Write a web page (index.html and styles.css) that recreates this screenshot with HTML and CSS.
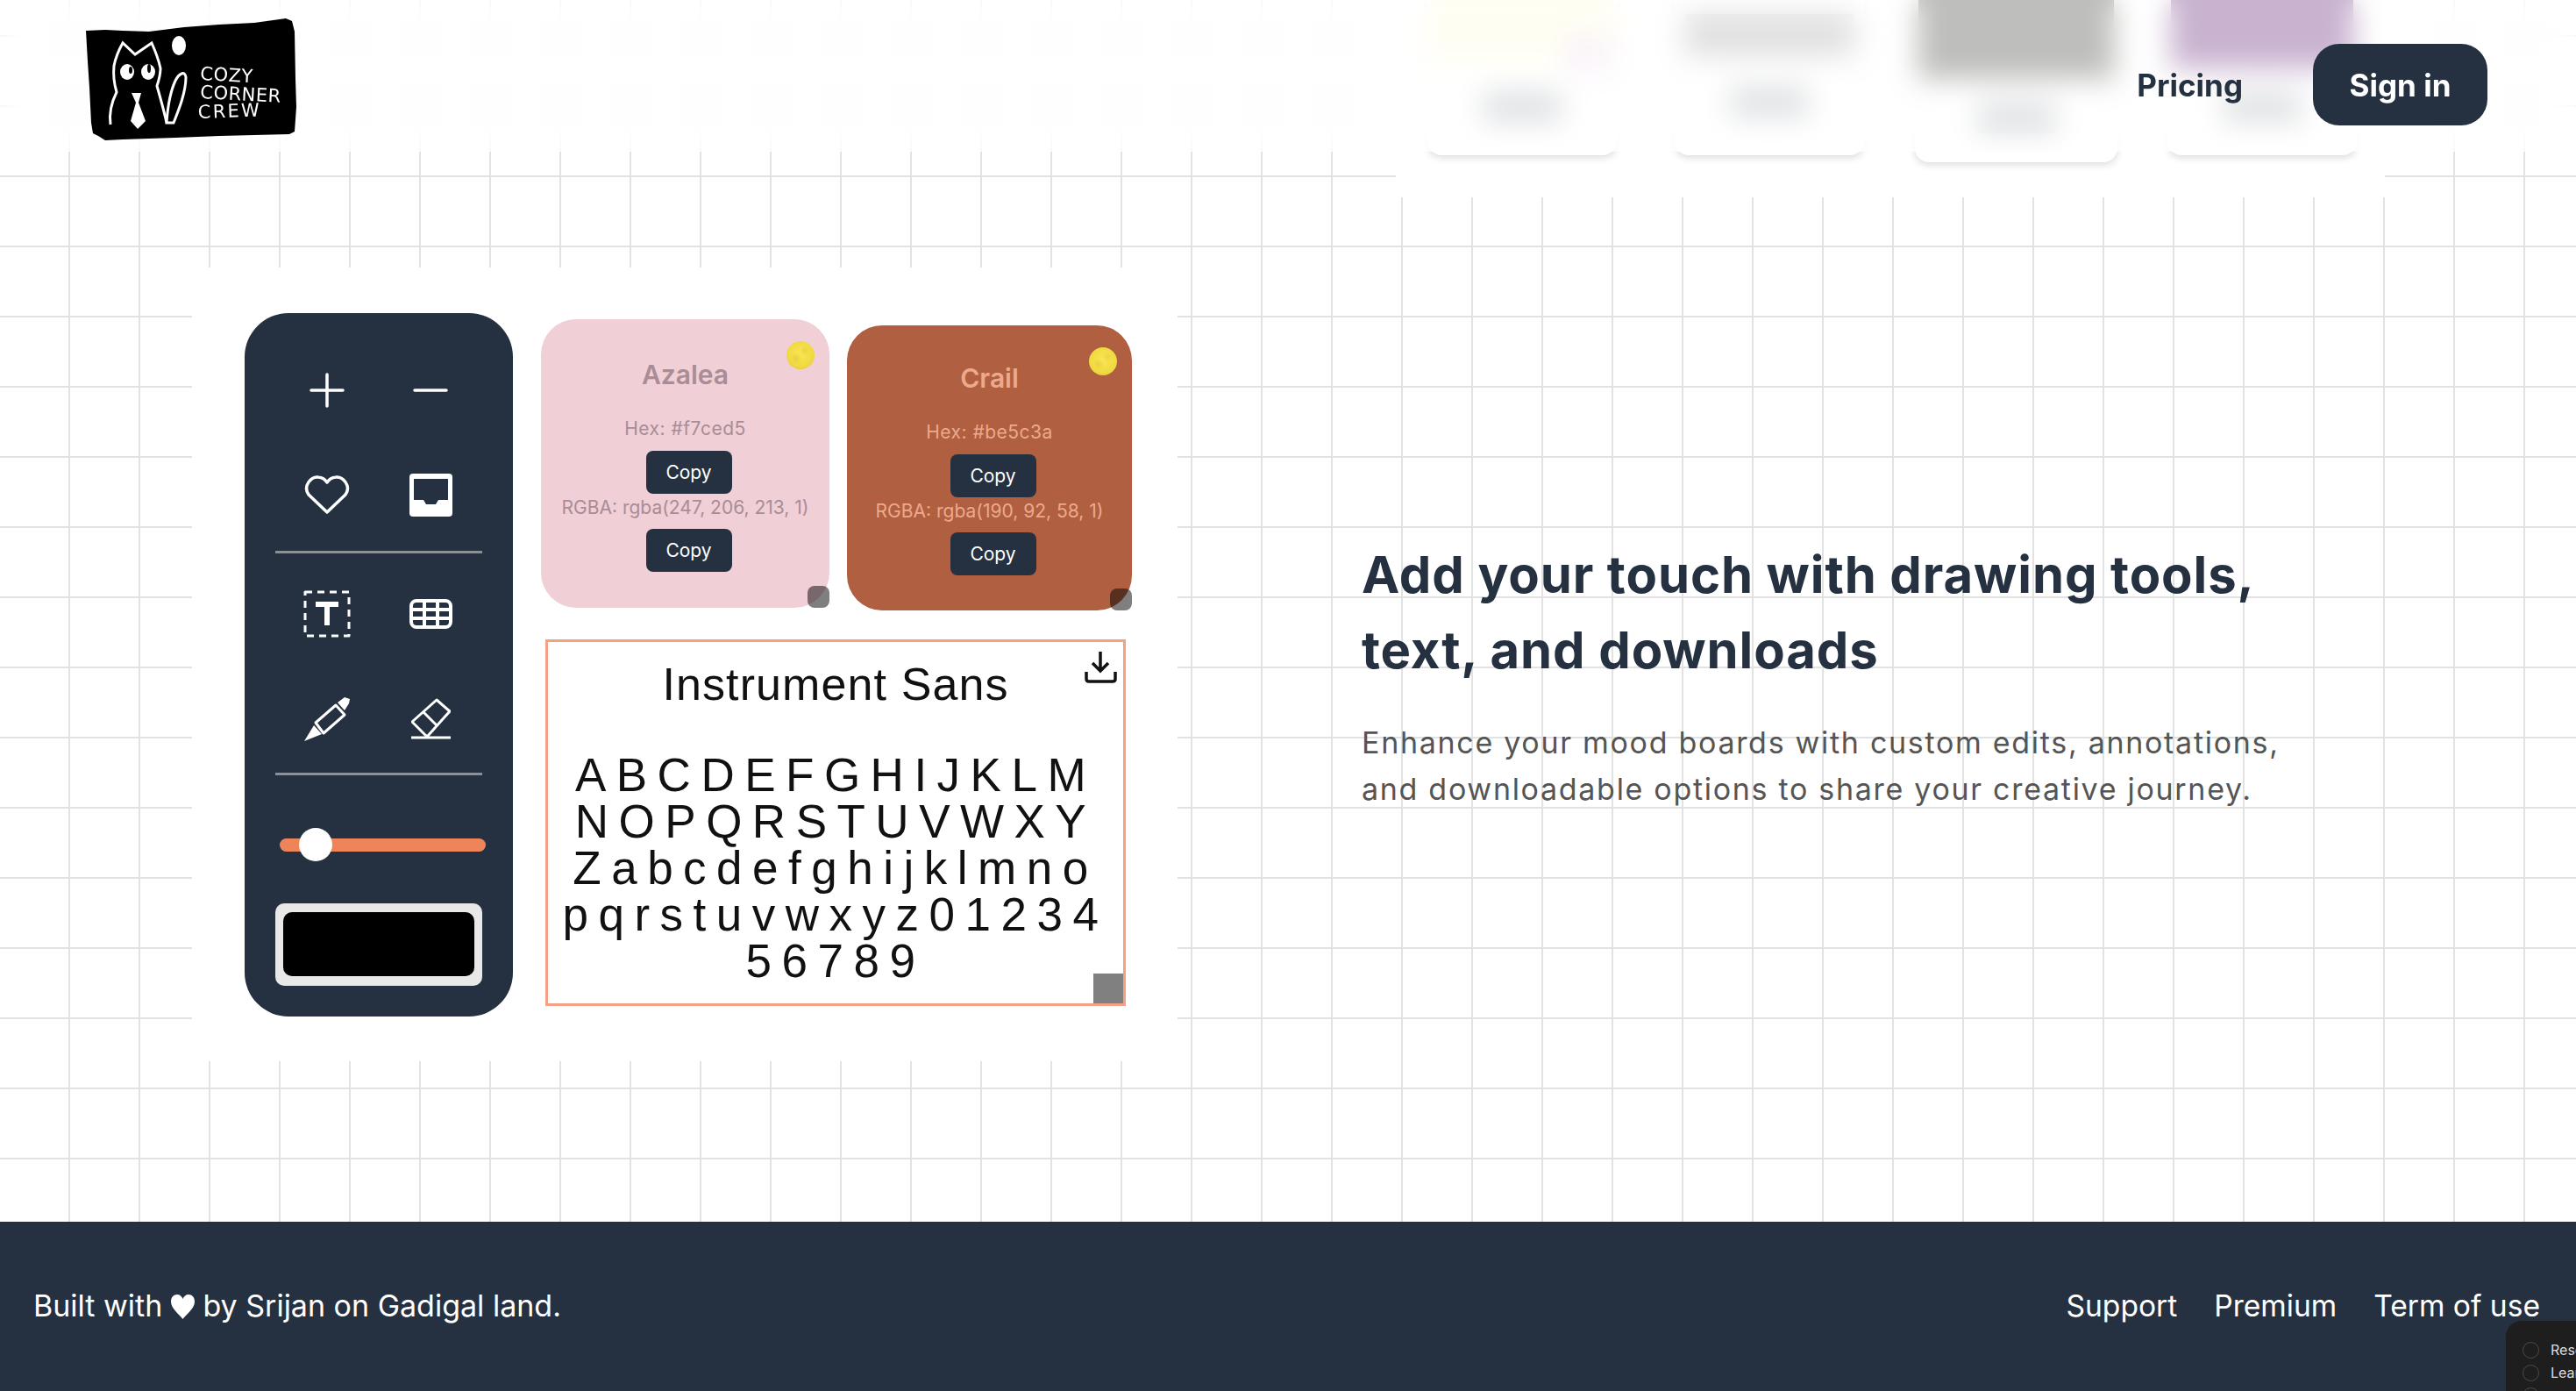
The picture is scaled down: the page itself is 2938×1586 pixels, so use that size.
FILE: index.html
```html
<!DOCTYPE html>
<html lang="en">
<head>
    <meta charset="UTF-8">
    <title>Cozy Corner Crew</title>
    <link rel="stylesheet" href="styles.css">
</head>
<body>

    <header class="site-header">
        <svg class="logo" viewBox="98 20 240 140" width="240" height="140">
            <path class="logo-bg" d="M98 35 L120 34 L140 35 L170 36 L210 31 L250 28 L290 26 L326 21 L333 24 L336 36 L337 90 L338 122 L336 150 L330 153 L290 154 L250 155 L200 157 L140 159 L120 160 L112 155 L106 152 L104 140 L102 100 L100 70 Z"/>
            <g class="logo-line">
                <path d="M126 142 C124 128 128 115 133 105 C130 95 129 85 130 75 C132 65 136 56 140 49 L154 62 L173 49 C177 58 181 68 183 78 C183 85 181 92 179 98 C183 112 187 126 190 140"/>
                <path d="M190 140 C191 125 194 105 200 92 C204 84 211 80 212 88 C212 105 204 125 198 140 Z"/>
            </g>
            <ellipse class="logo-fill" cx="145" cy="82" rx="8" ry="9"/>
            <ellipse class="logo-fill" cx="169" cy="82" rx="8" ry="9"/>
            <ellipse class="logo-pupil" cx="149" cy="80" rx="2" ry="4"/>
            <ellipse class="logo-pupil" cx="170" cy="78" rx="2" ry="5"/>
            <path class="logo-fill" d="M150 106 H161 L158 117 L166 138 L157 147 L149 138 L155 117 Z"/>
            <ellipse class="logo-fill" cx="204" cy="52" rx="8" ry="11"/>
            <g class="logo-text">
                <text x="228" y="91" textLength="60" transform="rotate(3 228 91)">COZY</text>
                <text x="228" y="112" textLength="92" transform="rotate(3 228 112)">CORNER</text>
                <text x="226" y="135" textLength="70" transform="rotate(-2 226 135)">CREW</text>
            </g>
        </svg>
        <nav class="header-nav">
            <a class="nav-link" href="#">Pricing</a>
            <a class="sign-in" href="#">Sign in</a>
        </nav>
    </header>

    <div class="page">
        <!-- Bottom of the previous section, mostly under the header -->
        <div class="prev-row">
            <div class="prev-media">
                <div class="prev-card">
                    <div class="swatch swatch-cream"></div>
                    <div class="swatch-dot"></div>
                    <div class="swatch-label"></div>
                </div>
                <div class="prev-card">
                    <div class="swatch swatch-silver"></div>
                    <div class="swatch-label"></div>
                </div>
                <div class="prev-card prev-card-big">
                    <div class="swatch swatch-grey"></div>
                    <div class="swatch-label label-high"></div>
                </div>
                <div class="prev-card">
                    <div class="swatch swatch-purple"></div>
                    <div class="swatch-label label-high"></div>
                </div>
            </div>
        </div>

        <section class="feature">
            <div class="board">
                <div class="panel">
                    <div class="tool-row">
                        <svg class="icon" width="40" height="40" viewBox="0 0 40 40"><path d="M20 2 V38 M2 20 H38"/></svg>
                        <svg class="icon" width="40" height="40" viewBox="0 0 40 40"><path d="M2 20 H38"/></svg>
                    </div>
                    <div class="tool-row tool-row-next">
                        <svg class="icon" width="52" height="46" viewBox="0 0 52 46"><path d="M26 43 L5 23 C-2 13 8 2 16 3 C21 3.5 24 6 26 9 C28 6 31 3.5 36 3 C44 2 54 13 47 23 Z"/></svg>
                        <svg width="49" height="49" viewBox="0 0 49 49"><rect class="icon-solid" width="49" height="49" rx="4"/><path class="icon-cut" d="M5 6 H44 V30 H33 L30 35 H19 L16 30 H5 Z"/></svg>
                    </div>
                    <div class="divider"></div>
                    <div class="tool-row">
                        <svg class="icon icon-thin" width="54" height="54" viewBox="0 0 54 54"><rect x="2" y="2" width="50" height="50" stroke-dasharray="8 6"/><path class="icon-t" d="M14 16 H40 M27 16 V40"/></svg>
                        <svg class="icon icon-table" width="49" height="34" viewBox="0 0 49 34"><rect x="2" y="2" width="45" height="30" rx="6"/><path d="M2 12 H47 M2 22 H47 M17 2 V32 M32 2 V32"/></svg>
                    </div>
                    <div class="tool-row tool-row-next">
                        <svg class="icon icon-thin" width="52" height="52" viewBox="0 0 52 52"><path d="M13 31 L36 11 L46 22 L22 43 Z"/><path class="icon-solid" d="M0 52 L11 34 L20 44 Z M38 8 L46 2 L52 4 L51 9 L46 17 Z"/></svg>
                        <svg class="icon icon-thin" width="45" height="47" viewBox="0 0 45 47"><path d="M1 27 L29 2 L44 15 L19 43 H17 Z M13 15 L29 31"/><path d="M0 45 H45"/></svg>
                    </div>
                    <div class="divider divider-low"></div>
                    <div class="slider"><span class="slider-knob"></span></div>
                    <div class="color-box"><div class="color-fill"></div></div>
                </div>

                <div class="board-right">
                    <div class="color-cards">
                        <div class="color-card card-azalea">
                            <span class="pin"></span>
                            <h4 class="color-name">Azalea</h4>
                            <p class="color-value color-hex">Hex: #f7ced5</p>
                            <button class="copy-btn">Copy</button>
                            <p class="color-value color-rgba">RGBA: rgba(247, 206, 213, 1)</p>
                            <button class="copy-btn">Copy</button>
                            <span class="resize-handle"></span>
                        </div>
                        <div class="color-card card-crail">
                            <span class="pin"></span>
                            <h4 class="color-name">Crail</h4>
                            <p class="color-value color-hex">Hex: #be5c3a</p>
                            <button class="copy-btn">Copy</button>
                            <p class="color-value color-rgba">RGBA: rgba(190, 92, 58, 1)</p>
                            <button class="copy-btn">Copy</button>
                            <span class="resize-handle"></span>
                        </div>
                    </div>
                    <div class="font-card">
                        <svg class="download" width="37" height="37" viewBox="0 0 37 37"><path d="M18 1 V23 M9 14 L18 23 L27 14 M2 24 V32 Q2 35 5 35 H32 Q35 35 35 32 V24"/></svg>
                        <h3 class="font-name">Instrument Sans</h3>
                        <p class="font-glyphs">ABCDEFGHIJKLM<br>NOPQRSTUVWXY<br>Zabcdefghijklmno<br>pqrstuvwxyz01234<br>56789</p>
                        <span class="font-handle"></span>
                    </div>
                </div>
            </div>

            <div class="feature-text">
                <h2>Add your touch with drawing tools, text, and downloads</h2>
                <p>Enhance your mood boards with custom edits, annotations, and downloadable options to share your creative journey.</p>
            </div>
        </section>
    </div>

    <footer class="site-footer">
        <p class="built-with">Built with
            <svg class="footer-heart" width="27" height="28" viewBox="0 0 27 28"><path d="M13.5 28 C9 22 0 16 0 8 C0 3 3 0 7 0 C10 0 12.5 2 13.5 5 C14.5 2 17 0 20 0 C24 0 27 3 27 8 C27 16 18 22 13.5 28 Z"/></svg>
            by Srijan on Gadigal land.</p>
        <nav class="footer-nav">
            <a href="#">Support</a>
            <a href="#">Premium</a>
            <a href="#">Term of use</a>
        </nav>
    </footer>

    <!-- Small survey widget cut off by the window corner -->
    <div class="widget">
        <div class="widget-row"><span class="radio"></span>Research</div>
        <div class="widget-row"><span class="radio"></span>Learn</div>
        <div class="widget-row"><span class="radio"></span></div>
    </div>

</body>
</html>
```

FILE: styles.css
```css
* {
    box-sizing: border-box;
}
html, body {
    height: 100%;
}
body {
    position: relative;
    margin: 0;
    overflow: hidden;
    background-color: #fff;
    color: #253140;
    font-family: Inter, "Liberation Sans", sans-serif;
}
a {
    color: inherit;
    text-decoration: none;
}

/* header */
.site-header {
    position: absolute;
    top: 0;
    left: 0;
    z-index: 10;
    display: flex;
    align-items: flex-start;
    width: 100%;
    height: 173px;
    padding: 20px 101px 0 98px;
    background-color: rgba(255, 255, 255, 0.5);
    backdrop-filter: blur(16px);
}
.logo {
    display: block;
}
.logo-bg {
    fill: #000;
}
.logo-line {
    fill: none;
    stroke: #fff;
    stroke-width: 3;
}
.logo-fill {
    fill: #fff;
}
.logo-pupil {
    fill: #000;
}
.logo-text {
    fill: #fff;
    font-family: "DejaVu Sans", sans-serif;
    font-size: 21px;
}
.header-nav {
    display: flex;
    align-items: center;
    gap: 80px;
    margin-left: auto;
    margin-top: 30px;
}
.nav-link {
    font-size: 35px;
    font-weight: 700;
}
.sign-in {
    display: flex;
    align-items: center;
    justify-content: center;
    width: 199px;
    height: 93px;
    border-radius: 30px;
    background-color: #253140;
    color: #fff;
    font-size: 35px;
    font-weight: 700;
}

/* page with the grid */
.page {
    height: 1393px;
    background-color: #fff;
    background-image:
        linear-gradient(to right, #e2e2e2 2px, transparent 2px),
        linear-gradient(to bottom, #e2e2e2 2px, transparent 2px);
    background-size: 80px 80px;
    background-position: 78px 40px;
}
.prev-row {
    display: flex;
    justify-content: flex-end;
    height: 225px;
    padding-right: 218px;
}
.prev-media {
    display: flex;
    align-items: flex-start;
    gap: 66px;
    width: 1128px;
    height: 225px;
    padding-left: 36px;
    background-color: #fff;
}
.prev-card {
    position: relative;
    width: 216px;
    height: 177px;
    border-radius: 0 0 16px 16px;
    background-color: #fff;
    box-shadow: 0 3px 8px rgba(0, 0, 0, 0.14);
}
.prev-card-big {
    width: 231px;
    height: 185px;
    margin: 0 -9px 0 -8px;
}
.swatch {
    height: 64px;
    margin: 0 4px;
}
.swatch-cream {
    height: 70px;
    background-color: #fffde6;
}
.swatch-silver {
    height: 48px;
    margin: 16px 12px 0;
    background-color: #c0c0c0;
}
.swatch-grey {
    height: 90px;
    background-color: #7c7c78;
}
.swatch-purple {
    height: 78px;
    background-color: #91659f;
}
.swatch-dot {
    position: absolute;
    top: 40px;
    right: 10px;
    width: 50px;
    height: 40px;
    background-color: #f4e6f4;
}
.swatch-label {
    width: 90px;
    height: 36px;
    margin: 34px auto 0;
    background-color: #c0c4c8;
}
.label-high {
    margin-top: 26px;
}

/* feature section */
.feature {
    display: flex;
    align-items: center;
    margin-top: 80px;
    padding-left: 219px;
}
.board {
    display: flex;
    gap: 32px;
    flex: none;
    width: 1124px;
    height: 905px;
    padding: 52px 0 0 60px;
    background-color: #fff;
}

/* tool panel */
.panel {
    position: relative;
    flex: none;
    width: 306px;
    height: 802px;
    padding: 58px 35px 0;
    border-radius: 50px;
    background-color: #253140;
}
.panel::before {
    content: "";
    position: absolute;
    top: 465px;
    left: -2px;
    z-index: -1;
    width: 310px;
    height: 1px;
    background-color: #000;
}
.tool-row {
    display: grid;
    grid-template-columns: 118px 118px;
    justify-items: center;
    align-items: center;
    height: 60px;
}
.tool-row-next {
    margin-top: 59px;
}
.icon {
    fill: none;
    stroke: #fff;
    stroke-width: 3.5;
    stroke-linecap: round;
    stroke-linejoin: round;
}
.icon-thin {
    stroke-width: 3;
    stroke-linecap: butt;
}
.icon-table {
    stroke-width: 4;
}
.icon-t {
    stroke-width: 6;
    stroke-linecap: butt;
}
.icon-solid {
    fill: #fff;
    stroke: none;
}
.icon-cut {
    fill: #253140;
}
.divider {
    height: 3px;
    margin: 34px 0 39px;
    background-color: #8b9096;
}
.divider-low {
    margin: 32px 0 0;
}
.slider {
    position: relative;
    width: 235px;
    height: 15px;
    margin: 72px 0 0 5px;
    border-radius: 8px;
    background-color: #ee845a;
}
.slider-knob {
    position: absolute;
    top: -12px;
    left: 22px;
    width: 38px;
    height: 38px;
    border-radius: 50%;
    background-color: #fff;
}
.color-box {
    height: 94px;
    margin-top: 59px;
    padding: 10px 9px 11px;
    border-radius: 10px;
    background-color: #e8e8e8;
}
.color-fill {
    height: 100%;
    border-radius: 10px;
    background-color: #000;
}

/* colour cards */
.board-right {
    flex: none;
    margin-top: 7px;
}
.color-cards {
    display: flex;
    align-items: flex-start;
    gap: 20px;
}
.color-card {
    position: relative;
    display: flex;
    flex-direction: column;
    align-items: center;
    border-radius: 40px;
}
.card-azalea {
    width: 329px;
    height: 329px;
    padding-top: 43px;
    background-color: #f0cfd6;
    color: #a98c95;
}
.card-crail {
    width: 325px;
    height: 325px;
    margin-top: 7px;
    padding-top: 40px;
    background-color: #b06040;
    color: #eca98c;
}
.color-name {
    margin: 0 0 24px;
    font-size: 30px;
    font-weight: 600;
    line-height: 40px;
}
.color-value {
    margin: 0 0 7px;
    font-size: 21px;
    line-height: 36px;
}
.color-hex {
    letter-spacing: 0.5px;
}
.color-rgba {
    margin: 0 0 8px;
    line-height: 32px;
}
.copy-btn {
    width: 98px;
    height: 49px;
    margin-left: 8px;
    border: none;
    border-radius: 8px;
    background-color: #253140;
    color: #fff;
    font-family: inherit;
    font-size: 21px;
}
.pin {
    position: absolute;
    top: 25px;
    right: 17px;
    width: 32px;
    height: 32px;
    border-radius: 50%;
    background:
        radial-gradient(circle at 35% 60%, rgba(214, 178, 40, 0.35) 0, transparent 22%),
        radial-gradient(circle at 65% 35%, rgba(214, 178, 40, 0.3) 0, transparent 18%),
        radial-gradient(circle at 50% 45%, #f9e655 0%, #f0d93f 65%, #cdaa28 100%);
}
.resize-handle {
    position: absolute;
    right: 0;
    bottom: 0;
    width: 25px;
    height: 25px;
    border-radius: 8px;
    background-color: rgba(0, 0, 0, 0.5);
}

/* font card */
.font-card {
    position: relative;
    width: 662px;
    height: 418px;
    margin: 33px 0 0 5px;
    padding-top: 19px;
    border: 3px solid #f4a183;
    background-color: #fff;
    color: #111;
    text-align: center;
    font-family: "Liberation Sans", sans-serif;
}
.font-name {
    margin: 0;
    font-size: 52px;
    font-weight: 400;
    line-height: 58px;
    letter-spacing: 1.1px;
}
.font-glyphs {
    margin: 48px 0 0;
    font-size: 53px;
    line-height: 53px;
    letter-spacing: 11.5px;
}
.download {
    position: absolute;
    top: 10px;
    right: 7px;
    fill: none;
    stroke: #111;
    stroke-width: 3.5;
}
.font-handle {
    position: absolute;
    right: 0;
    bottom: 0;
    width: 34px;
    height: 34px;
    background-color: #808080;
}

/* text next to the board */
.feature-text {
    width: 1060px;
    margin: 23px 0 0 210px;
}
.feature-text h2 {
    margin: 0 0 36px;
    font-size: 58px;
    font-weight: 700;
    line-height: 86px;
    letter-spacing: 0.9px;
}
.feature-text p {
    margin: 0;
    color: #555;
    font-size: 34px;
    line-height: 53px;
    letter-spacing: 1.7px;
}

/* footer */
.site-footer {
    display: flex;
    align-items: center;
    justify-content: space-between;
    height: 193px;
    padding: 0 41px 2px 38px;
    background-color: #253140;
    color: #fff;
    font-size: 34px;
}
.built-with {
    margin: 0;
}
.footer-heart {
    vertical-align: -3px;
    fill: #fff;
}
.footer-nav {
    display: flex;
    gap: 42px;
    font-size: 33.6px;
}
.widget {
    position: absolute;
    top: 1506px;
    left: 2858px;
    width: 300px;
    height: 120px;
    padding: 20px 0 0 19px;
    border-radius: 18px 0 0 0;
    background-color: #1e1e1e;
    color: #ddd;
    font-size: 16px;
}
.widget-row {
    display: flex;
    align-items: center;
    gap: 13px;
    height: 26px;
}
.radio {
    width: 19px;
    height: 19px;
    border: 1px solid #4a4a4a;
    border-radius: 50%;
}
```
